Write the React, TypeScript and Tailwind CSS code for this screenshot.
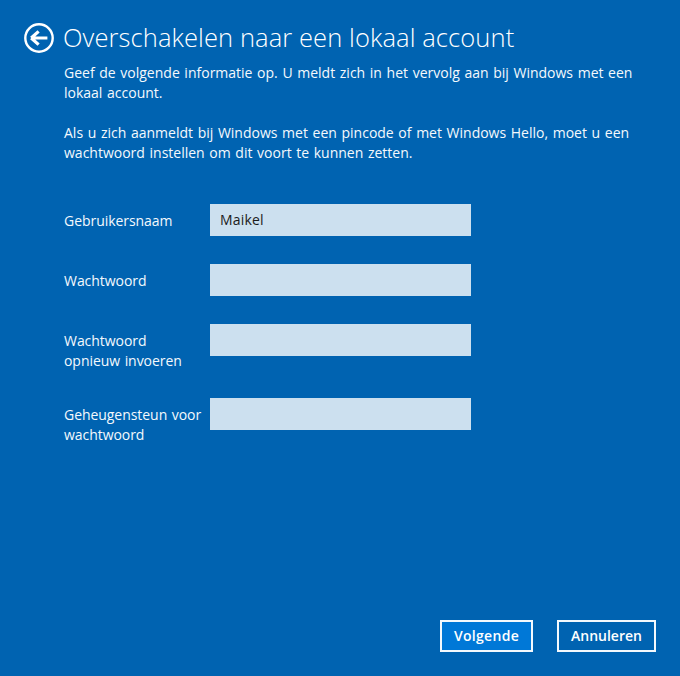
export default function App() {
  const font = { fontFamily: '"Open Sans", "Noto Sans", sans-serif' };
  const rows = [
    { label: ["Gebruikersnaam"], value: "Maikel", mb: "mb-[28px]" },
    { label: ["Wachtwoord"], value: "", mb: "mb-[28px]" },
    { label: ["Wachtwoord", "opnieuw invoeren"], value: "", mb: "mb-[27px]" },
    { label: ["Geheugensteun voor", "wachtwoord"], value: "", mb: "" },
  ];
  return (
    <div className="w-[680px] h-[676px] bg-[#0063b1] text-white flex flex-col overflow-hidden font-['Open_Sans',sans-serif]" style={font}>
      <div className="flex items-start pl-[24px] pt-[23px] gap-[9px]">
        <svg width="30" height="30" viewBox="0 0 30 30" className="shrink-0">
          <circle cx="15" cy="15" r="13.7" fill="none" stroke="white" strokeWidth="2.4" />
          <path d="M7.2 15 L14.6 8.4 M7.2 15 L14.6 21.6 M7.2 15 H23.4" fill="none" stroke="white" strokeWidth="3.2" />
        </svg>
        <h1 className="text-[25.5px] leading-[28px] font-light tracking-[0.1px] whitespace-nowrap">Overschakelen naar een lokaal account</h1>
      </div>
      <div className="pl-[64px] pt-[10px] text-[14px] leading-[20px] text-[#f4f9fd] tracking-[0px] [word-spacing:1px]">
        <p className="m-0 whitespace-nowrap">Geef de volgende informatie op. U meldt zich in het vervolg aan bij Windows met een</p>
        <p className="m-0 mb-[20px]">lokaal account.</p>
        <p className="m-0 whitespace-nowrap">Als u zich aanmeldt bij Windows met een pincode of met Windows Hello, moet u een</p>
        <p className="m-0">wachtwoord instellen om dit voort te kunnen zetten.</p>
      </div>
      <div className="pl-[64px] pt-[41px] flex flex-col">
        {rows.map((r, i) => (
          <div key={i} className={`flex items-start ${r.mb}`}>
            <div className="w-[146px] shrink-0 text-[14px] leading-[20px] text-[#f4f9fd] tracking-[-0.05px] [word-spacing:1px] whitespace-nowrap pt-[7px]">
              {r.label.map((l) => (
                <div key={l}>{l}</div>
              ))}
            </div>
            <div className="w-[261px] h-[32px] bg-[#cce0ef] text-[#1b1b1b] text-[14px] leading-[32px] pl-[10px] tracking-[0.2px]">{r.value}</div>
          </div>
        ))}
      </div>
      <div className="flex-1" />
      <div className="flex justify-end gap-[24px] pr-[24px] pb-[24px]">
        <button className="w-[93px] h-[32px] box-border border-[2px] border-[#f4f9fd] bg-[#0078d7] text-white text-[14px] font-semibold leading-none tracking-[0.3px]">Volgende</button>
        <button className="w-[99px] h-[32px] box-border border-[2px] border-[#f4f9fd] bg-[#0063b1] text-white text-[14px] font-semibold leading-none tracking-[0px]">Annuleren</button>
      </div>
    </div>
  );
}
